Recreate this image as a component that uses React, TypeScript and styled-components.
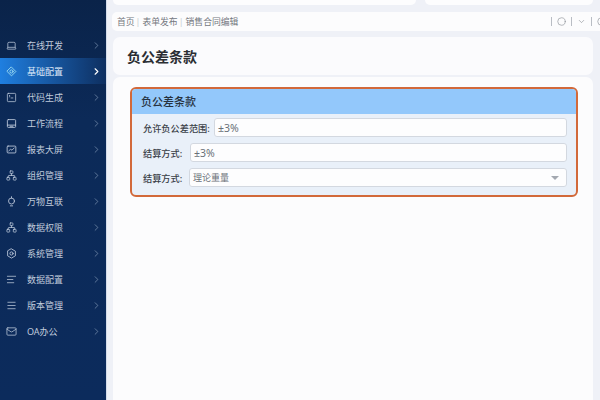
import type { ReactNode } from "react";
import styled, { createGlobalStyle } from "styled-components";
import {
  AlignLeft,
  ChevronDown,
  ChevronRight,
  Circle,
  Laptop,
  Mail,
  Menu,
  Network,
  SquareTerminal,
} from "lucide-react";

const GlobalStyle = createGlobalStyle`
  html, body {
    margin: 0;
    padding: 0;
    width: 600px;
    height: 400px;
    overflow: hidden;
  }
  * {
    box-sizing: border-box;
  }
`;

const Page = styled.div`
  display: grid;
  grid-template-columns: 107px 1fr;
  width: 600px;
  height: 400px;
  background: #eff1f7;
  font-family: "Noto Sans", "Noto Sans CJK SC", sans-serif;
`;

const Sidebar = styled.nav`
  background: linear-gradient(180deg, #0a2349 0%, #0c2a58 30%, #0c2b5c 100%);
  border-right: 1px solid #d4dcea;
  padding-top: 32px;
`;

const NavItem = styled.div<{ $active?: boolean }>`
  display: grid;
  grid-template-columns: 23px 1fr 12px;
  align-items: center;
  height: 26px;
  padding: 0 3px 0 4px;
  font-size: 9px;
  color: ${(p) => (p.$active ? "#dfeaf9" : "#c0cbdb")};
  background: ${(p) =>
    p.$active
      ? "linear-gradient(90deg, #1f7fe0 0%, #17569f 50%, #0e2f60 100%)"
      : "transparent"};
`;

const NavIcon = styled.span<{ $active?: boolean }>`
  display: flex;
  padding-left: 2px;
  color: ${(p) => (p.$active ? "#a8e6f5" : "#c3cfdf")};
`;

const NavArrow = styled.span<{ $active?: boolean }>`
  display: flex;
  color: ${(p) => (p.$active ? "#ffffff" : "#8297b5")};
`;

const Main = styled.main`
  display: flex;
  flex-direction: column;
  min-width: 0;
  height: 400px;
  padding: 0 7px 0 6px;
`;

const TopStrip = styled.div`
  display: grid;
  grid-template-columns: 303px 1fr;
  gap: 9px;
  height: 5px;
  margin: 0 0 7px;
`;

const TopCard = styled.div`
  background: #fdfdfe;
  border-radius: 0 0 6px 6px;
`;

const Breadcrumb = styled.div`
  display: flex;
  align-items: center;
  height: 19px;
  margin: 0 -7px 6px -1px;
  padding: 0 0 0 5px;
  background: #fcfcfd;
  border-radius: 5px 0 0 5px;
  font-size: 8.8px;
  color: #74787f;
  overflow: hidden;
`;

const Crumb = styled.span`
  &:not(:last-of-type)::after {
    content: "|";
    margin: 0 2px 0 1px;
    color: #c8ccd2;
  }
`;

const Tools = styled.div`
  display: flex;
  align-items: center;
  gap: 5px;
  margin-left: auto;
  margin-right: -6px;
  color: #868b92;
`;

const Divider = styled.i`
  width: 1px;
  height: 9px;
  background: #b9bdc4;
`;

const TitleCard = styled.header`
  display: flex;
  align-items: center;
  height: 38px;
  padding: 0 14px;
  margin-bottom: 2px;
  background: #fbfbfd;
  border-radius: 7px;
`;

const Title = styled.h1`
  margin: 0;
  font-size: 14px;
  font-weight: 700;
  color: #2b2e33;
`;

const ContentCard = styled.section`
  flex: 1;
  padding: 10px 15px 0 17px;
  background: #fcfcfd;
  border-radius: 7px 7px 0 0;
`;

const Panel = styled.div`
  border: 2px solid #d2693a;
  border-radius: 6px;
  overflow: hidden;
  background: #e9f0f9;
  padding-bottom: 8px;
`;

const PanelHead = styled.h2`
  margin: 0 0 4px;
  height: 25px;
  padding: 0 9px;
  background: #93c8fb;
  font-size: 11px;
  line-height: 25px;
  font-weight: 500;
  color: #27323f;
`;

const Row = styled.div`
  display: flex;
  align-items: center;
  height: 19px;
  margin: 0 9px 6px 11px;
  &:last-child {
    margin-bottom: 0;
  }
`;

const Label = styled.span<{ $width: number }>`
  flex: none;
  width: ${(p) => p.$width}px;
  font-size: 9.2px;
  font-weight: 500;
  color: #3a4048;
`;

const Field = styled.div`
  flex: 1;
  display: flex;
  align-items: center;
  justify-content: space-between;
  height: 19px;
  padding: 0 3px;
  background: #fdfdfe;
  border: 1px solid #d3d8e0;
  border-radius: 3px;
  font-size: 9px;
  color: #6a7078;
`;

const Percent = styled.span`
  font-size: 10.5px;
`;

const Caret = styled.span`
  width: 0;
  height: 0;
  margin-right: 4px;
  border-left: 4px solid transparent;
  border-right: 4px solid transparent;
  border-top: 4px solid #a3a8b0;
`;

function Glyph({ children }: { children: ReactNode }) {
  return (
    <svg
      width={11}
      height={11}
      viewBox="0 0 24 24"
      fill="none"
      stroke="currentColor"
      strokeWidth={1.8}
      strokeLinecap="round"
      strokeLinejoin="round"
    >
      {children}
    </svg>
  );
}

const DiamondIcon = () => (
  <Glyph>
    <path d="M12 2.5 21.5 12 12 21.5 2.5 12Z" />
    <circle cx="12" cy="12" r="3.5" />
  </Glyph>
);

const PanelIcon = () => (
  <Glyph>
    <rect x="3" y="3.5" width="18" height="17" rx="2" />
    <path d="M3 15.5h18M9 18h6" />
  </Glyph>
);

const ScreenIcon = () => (
  <Glyph>
    <rect x="2.5" y="4.5" width="19" height="15" rx="2" />
    <path d="M6 15l4-3.5 3 2 5-5" />
  </Glyph>
);

const PinRingIcon = () => (
  <Glyph>
    <circle cx="12" cy="11" r="6.5" />
    <path d="M12 1.5v3M9.5 21.5h5" />
  </Glyph>
);

const HexRingIcon = () => (
  <Glyph>
    <path d="M12 2l8.5 5v10L12 22l-8.5-5V7Z" />
    <circle cx="12" cy="12" r="3.5" />
  </Glyph>
);

const lucideProps = { size: 11, strokeWidth: 1.6 };

const navItems = [
  { label: "在线开发", icon: <Laptop {...lucideProps} /> },
  { label: "基础配置", icon: <DiamondIcon />, active: true },
  { label: "代码生成", icon: <SquareTerminal {...lucideProps} /> },
  { label: "工作流程", icon: <PanelIcon /> },
  { label: "报表大屏", icon: <ScreenIcon /> },
  { label: "组织管理", icon: <Network {...lucideProps} /> },
  { label: "万物互联", icon: <PinRingIcon /> },
  { label: "数据权限", icon: <Network {...lucideProps} /> },
  { label: "系统管理", icon: <HexRingIcon /> },
  { label: "数据配置", icon: <AlignLeft {...lucideProps} /> },
  { label: "版本管理", icon: <Menu {...lucideProps} /> },
  { label: "OA办公", icon: <Mail {...lucideProps} /> },
];

export default function App() {
  return (
    <Page>
      <GlobalStyle />
      <Sidebar>
        {navItems.map(({ label, icon, active }) => (
          <NavItem key={label} $active={active}>
            <NavIcon $active={active}>{icon}</NavIcon>
            <span>{label}</span>
            <NavArrow $active={active}>
              <ChevronRight size={11} strokeWidth={active ? 2.5 : 1.5} />
            </NavArrow>
          </NavItem>
        ))}
      </Sidebar>
      <Main>
        <TopStrip>
          <TopCard />
          <TopCard />
        </TopStrip>
        <Breadcrumb>
          <Crumb>首页</Crumb>
          <Crumb>表单发布</Crumb>
          <Crumb>销售合同编辑</Crumb>
          <Tools>
            <Divider />
            <Circle size={9} strokeWidth={1.6} />
            <Divider />
            <ChevronDown size={9} strokeWidth={1.6} />
            <Divider />
            <Circle size={9} strokeWidth={1.6} />
          </Tools>
        </Breadcrumb>
        <TitleCard>
          <Title>负公差条款</Title>
        </TitleCard>
        <ContentCard>
          <Panel>
            <PanelHead>负公差条款</PanelHead>
            <Row>
              <Label $width={71}>允许负公差范围:</Label>
              <Field>
                <Percent>±3%</Percent>
              </Field>
            </Row>
            <Row>
              <Label $width={47}>结算方式:</Label>
              <Field>
                <Percent>±3%</Percent>
              </Field>
            </Row>
            <Row>
              <Label $width={46}>结算方式:</Label>
              <Field>
                理论重量
                <Caret />
              </Field>
            </Row>
          </Panel>
        </ContentCard>
      </Main>
    </Page>
  );
}
